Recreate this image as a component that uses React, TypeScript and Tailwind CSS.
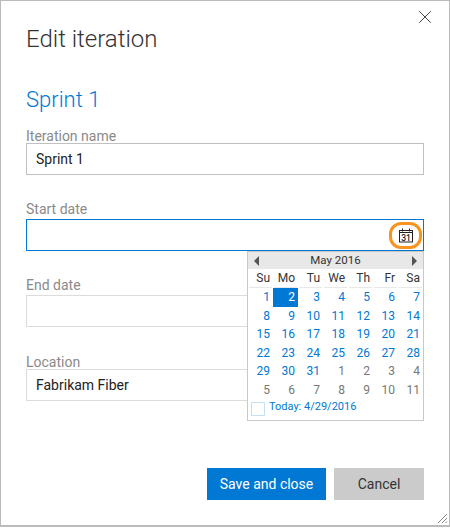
import React from 'react';
import { X } from 'lucide-react';

const font = { fontFamily: 'Roboto, "Noto Sans", sans-serif' };

const weeks = [
  [[1, 1], [2, 1], [3, 1], [4, 1], [5, 1], [6, 1], [7, 1]],
  [[8, 1], [9, 1], [10, 1], [11, 1], [12, 1], [13, 1], [14, 1]],
  [[15, 1], [16, 1], [17, 1], [18, 1], [19, 1], [20, 1], [21, 1]],
  [[22, 1], [23, 1], [24, 1], [25, 1], [26, 1], [27, 1], [28, 1]],
  [[29, 1], [30, 1], [31, 1], [1, 0], [2, 0], [3, 0], [4, 0]],
  [[5, 0], [6, 0], [7, 0], [8, 0], [9, 0], [10, 0], [11, 0]],
];

const dayNames = ['Su', 'Mo', 'Tu', 'We', 'Th', 'Fr', 'Sa'];

function Field({
  label,
  value,
  tight,
  borderClass,
  children,
}: {
  label: string;
  value?: string;
  tight?: boolean;
  borderClass: string;
  children?: React.ReactNode;
}) {
  return (
    <div className="mb-[26px]">
      <div className={`text-[14px] text-[#8a8a8a] ${tight ? 'h-[16px] leading-[18px]' : 'h-[18px] leading-[16px]'}`}>
        {label}
      </div>
      <div className={`relative h-[32px] border px-[9px] text-[14px] leading-[31px] text-[#222] ${borderClass}`}>
        {value}
        {children}
      </div>
    </div>
  );
}

function CalendarIcon() {
  return (
    <svg width="16" height="15" viewBox="0 0 16 15" fill="none" stroke="#222" strokeWidth="1">
      <rect x="1.5" y="2.5" width="13" height="11.5" />
      <path d="M1.5 4.5h13M4.5 0.5v3M11.5 0.5v3" />
      <text x="8" y="12.5" textAnchor="middle" fontSize="8.5" fontWeight="500" fill="#222" stroke="none">31</text>
    </svg>
  );
}

function DatePopup() {
  return (
    <div className="absolute left-[221px] top-[50px] z-10 h-[170px] w-[177px] border border-[#c8c8c8] bg-white text-[12px]">
      <div className="flex h-[17px] items-center justify-between bg-[#e8e8e8] px-[6px] text-[11.5px] text-[#333]">
        <span className="h-0 w-0 border-y-[5px] border-r-[5px] border-y-transparent border-r-[#555]" />
        <span>May 2016</span>
        <span className="h-0 w-0 border-y-[5px] border-l-[5px] border-y-transparent border-l-[#555]" />
      </div>
      <div className="grid grid-cols-[repeat(7,25px)]">
        {dayNames.map((d) => (
          <div key={d} className="mx-[1px] h-[19px] border-b border-[#e8e8e8] pr-[2px] text-right leading-[18px] text-[#333]">
            {d}
          </div>
        ))}
        {weeks.flat().map(([n, current], i) => (
          <div
            key={i}
            className={`h-[18.6px] pr-[3px] text-right leading-[19px] ${
              i === 1 ? 'bg-[#0078d4] text-white' : current ? 'text-[#0078d4]' : 'text-[#777]'
            }`}
          >
            {n}
          </div>
        ))}
      </div>
      <div className="flex items-start pl-[3px] text-[#0078d4]">
        <span className="mr-[4px] mt-[2px] h-[14px] w-[14px] border border-[#c4e0f5]" />
        <span className="text-[11px] leading-[13px]">Today: 4/29/2016</span>
      </div>
    </div>
  );
}

export default function App() {
  return (
    <div className="h-[528px] w-[450px] bg-white" style={font}>
      <div className="relative flex h-[527px] w-[450px] flex-col border-x border-t border-b-2 border-[#bbb] px-[25px] pt-[22px]">
        <X className="absolute right-[13px] top-[5px] h-[22px] w-[22px] text-[#333]" strokeWidth={1} absoluteStrokeWidth />
        <h1 className="h-[32px] text-[24px] font-light leading-[32px] text-[#333]">Edit iteration</h1>
        <h2 className="mt-[30px] h-[30px] text-[22px] font-light leading-[30px] text-[#0078d4]">Sprint 1</h2>
        <div className="relative mt-[12px] w-[398px]">
          <Field label="Iteration name" value="Sprint 1" tight borderClass="border-[#c0c0c0]" />
          <Field label="Start date" borderClass="border-[#0078d4]">
            <div className="absolute right-[1px] top-[2px] flex h-[27px] w-[33px] items-center justify-center rounded-[12px] border-[3px] border-[#f7931e]">
              <CalendarIcon />
            </div>
          </Field>
          <Field label="End date" borderClass="border-[#dcdcdc]" />
          <Field label="Location" value="Fabrikam Fiber" tight borderClass="border-[#dcdcdc]" />
          <div className="absolute left-0 top-[74px] w-full">
            <DatePopup />
          </div>
        </div>
        <div className="mt-auto mb-[25px] flex w-[398px] justify-end gap-[8px] text-[14px]">
          <button className="h-[32px] w-[119px] bg-[#0078d4] text-white">Save and close</button>
          <button className="h-[32px] w-[90px] bg-[#cbcbcb] text-[#333]">Cancel</button>
        </div>
        <svg className="absolute bottom-[1px] right-[1px]" width="11" height="11" viewBox="0 0 11 11" stroke="#888" strokeWidth="1">
          <path d="M1 10L10 1M5 10l5-5M8.5 10l1.5-1.5" />
        </svg>
      </div>
    </div>
  );
}
